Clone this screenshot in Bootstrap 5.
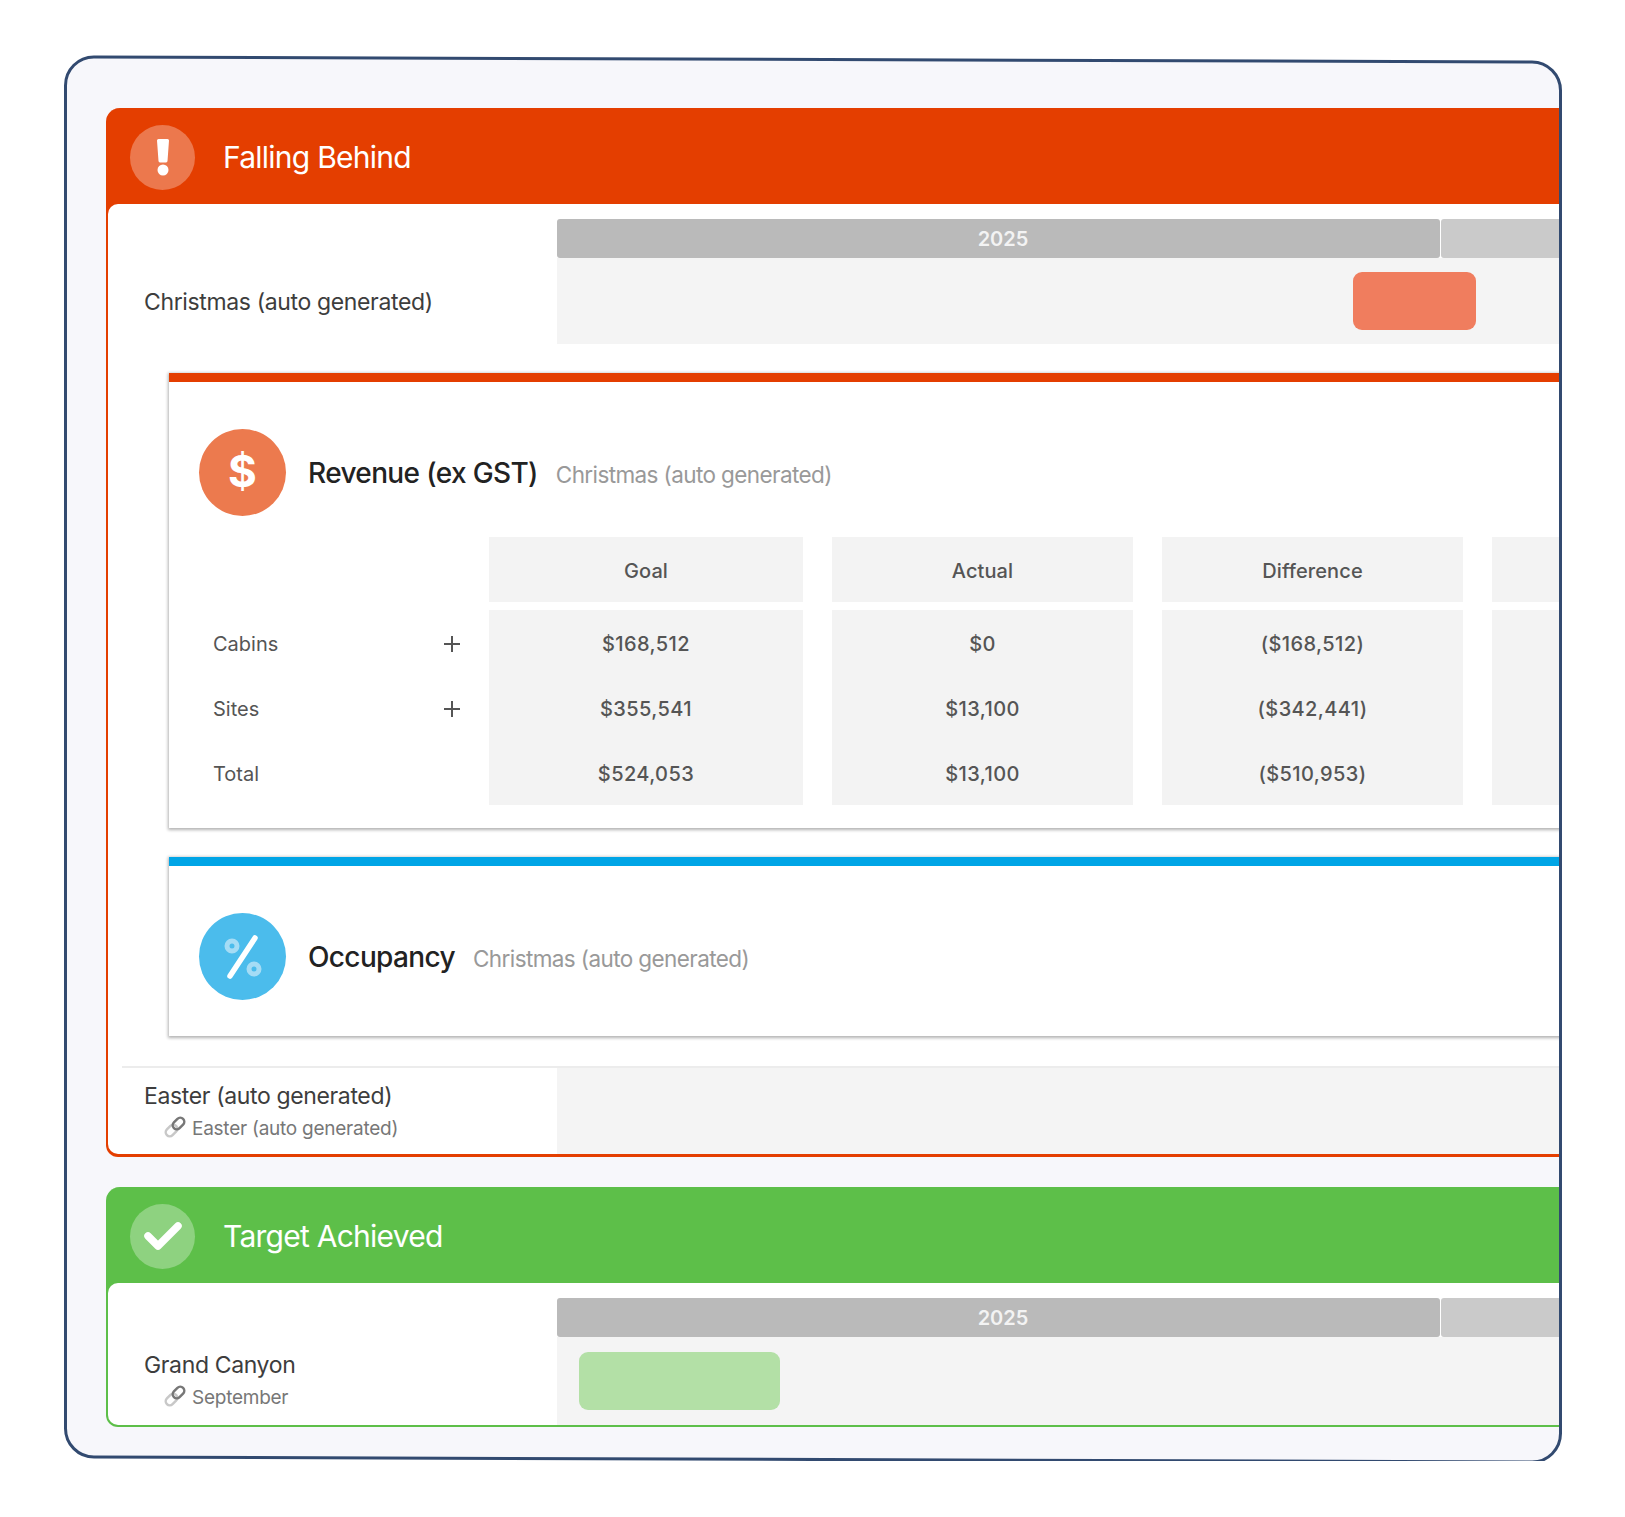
<!DOCTYPE html>
<html lang="en">
  <head>
    <meta charset="UTF-8" />
    <title>Goals</title>
    <link href="https://cdn.jsdelivr.net/npm/bootstrap@5.3.3/dist/css/bootstrap.min.css" rel="stylesheet" />
    <style>
      body { background: #fff; font-family: Inter, "Liberation Sans", sans-serif; color: #444; }
      .frame { position: relative; width: 1498px; height: 1403px; margin: 58px 0 0 64px; z-index: 0; }
      .frame::before { content: ""; position: absolute; inset: 0; z-index: -1; background: #f7f7fb; border: 3px solid #324a70; border-radius: 30px; transform: skewY(.2deg); }
      .frame-clip { width: 1495px; height: 100%; overflow: hidden; padding: 50px 0 0 42px; }
      .panel { width: 1600px; border-style: solid; border-width: 0 2px 3px 2px; border-radius: 14px 0 0 12px; }
      .panel + .panel { margin-top: 30px; }
      .panel-red { background: #e43e00; border-color: #e43e00; }
      .panel-green { background: #5dbf49; border-color: #5dbf49; border-bottom-width: 2px; }
      .panel-head { height: 96px; padding: 2px 0 0 22px; gap: 28px; color: #fff; font-size: 30px; letter-spacing: -.75px; }
      .head-ico { width: 65px; height: 65px; background: rgba(255,255,255,.3); }
      .panel-body { background: #fff; border-radius: 10px 0 0 10px; }
      .tl-row { padding-top: 15px; }
      .tl-label { width: 449px; height: 86px; padding-left: 36px; font-size: 23px; letter-spacing: -.36px; color: #3d3d3d; }
      .label-low { padding-top: 3px; }
      .label-high { height: 88px; padding-bottom: 2px; }
      .tl-sub { font-size: 19px; letter-spacing: -.25px; color: #777; padding-left: 20px; margin-top: 1px; gap: 6px; }
      .tl-side { width: 1147px; }
      .years { gap: 1px; height: 39px; }
      .year-a { width: 883px; background: #bababa; color: #f3f3f3; font-weight: 600; font-size: 20px; border-radius: 3px; padding-left: 9px; }
      .year-b { flex-grow: 1; background: #cacaca; border-radius: 3px 0 0 3px; }
      .tl-track { height: 86px; background: #f4f4f4; padding-top: 14px; }
      .track-tall { height: 88px; padding-top: 15px; }
      .tl-pill { height: 58px; border-radius: 9px; }
      .pill-red { width: 123px; margin-left: 796px; background: #f07d5e; }
      .pill-green { width: 201px; margin-left: 22px; background: #b3e0a6; }
      .goal-card { margin: 29px 0 0 61px; border: 0; border-radius: 0; border-top: 9px solid; box-shadow: 0 1px 3px 1px rgba(0,0,0,.3); }
      .goal-red { border-top-color: #e43e00; }
      .goal-blue { border-top-color: #00a5e6; }
      .goal-head { padding: 47px 0 0 30px; gap: 22px; }
      .goal-ico { width: 87px; height: 87px; color: #fff; }
      .ico-orange { background: #ec7a4e; font-size: 44px; font-weight: 700; padding-bottom: 4px; }
      .ico-blue { background: #4bbcec; }
      .goal-title { font-size: 28px; font-weight: 500; letter-spacing: -.63px; color: #222; }
      .goal-sub { font-size: 22.5px; letter-spacing: -.6px; color: #999; margin-left: -4px; padding-top: 4px; }
      .goal-grid { display: grid; grid-template-columns: 246px 314px 301px 301px 120px; column-gap: 29px; padding: 21px 0 23px 45px; font-size: 20px; color: #555; }
      .label-col { margin: 0 -29px 0 -1px; padding-right: 28px; }
      .grid-h { height: 65px; padding-top: 2px; background: #f3f3f3; margin-bottom: 8px; font-weight: 500; letter-spacing: .1px; }
      .grid-b { background: #f3f3f3; font-weight: 500; letter-spacing: .4px; }
      .grid-r { height: 65px; padding-top: 2px; }
      .row-plus { width: 18px; height: 18px; }
      .occ-pad { padding-bottom: 36px; }
      .divider { margin: 30px 0 0 14px; border-top: 2px solid #ececec; }
      .easter-label { width: 435px; padding-left: 22px; }
      .link-ico { margin-top: -3px; }
    </style>
  </head>
  <body>
    <div class="frame">
      <div class="frame-clip">

        <!-- Falling behind -->
        <div class="panel panel-red">
          <div class="panel-head d-flex align-items-center">
            <div class="head-ico rounded-circle d-flex align-items-center justify-content-center">
              <svg width="14" height="38" viewBox="0 0 14 38"><path d="M1 2.5A1.5 1.5 0 0 1 2.500 1h9A1.500 1.500 0 0 1 13 2.500L11.500 23a1.500 1.500 0 0 1-1.500 1.400H4A1.500 1.500 0 0 1 2.500 23z" fill="#fff"/><circle cx="7" cy="32" r="5.500" fill="#fff"/></svg>
            </div>
            <div>Falling Behind</div>
          </div>
          <div class="panel-body">
            <div class="tl-row d-flex">
              <div class="tl-label label-low align-self-end d-flex align-items-center">Christmas (auto generated)</div>
              <div class="tl-side">
                <div class="years d-flex">
                  <div class="year-a d-flex align-items-center justify-content-center">2025</div>
                  <div class="year-b"></div>
                </div>
                <div class="tl-track"><div class="tl-pill pill-red"></div></div>
              </div>
            </div>

            <div class="card goal-card goal-red">
              <div class="goal-head d-flex align-items-center">
                <div class="goal-ico ico-orange rounded-circle d-flex align-items-center justify-content-center">$</div>
                <div class="goal-title">Revenue (ex GST)</div>
                <div class="goal-sub">Christmas (auto generated)</div>
              </div>
              <div class="goal-grid">
                <div class="label-col">
                  <div class="grid-h bg-transparent"></div>
                  <div class="grid-r d-flex align-items-center justify-content-between">Cabins
                    <svg class="row-plus" viewBox="0 0 18 18"><path d="M9 1v16M1 9h16" stroke="#555" stroke-width="2"/></svg></div>
                  <div class="grid-r d-flex align-items-center justify-content-between">Sites
                    <svg class="row-plus" viewBox="0 0 18 18"><path d="M9 1v16M1 9h16" stroke="#555" stroke-width="2"/></svg></div>
                  <div class="grid-r d-flex align-items-center">Total</div>
                </div>
                <div class="text-center">
                  <div class="grid-h d-flex align-items-center justify-content-center">Goal</div>
                  <div class="grid-b">
                    <div class="grid-r d-flex align-items-center justify-content-center">$168,512</div>
                    <div class="grid-r d-flex align-items-center justify-content-center">$355,541</div>
                    <div class="grid-r d-flex align-items-center justify-content-center">$524,053</div>
                  </div>
                </div>
                <div class="text-center">
                  <div class="grid-h d-flex align-items-center justify-content-center">Actual</div>
                  <div class="grid-b">
                    <div class="grid-r d-flex align-items-center justify-content-center">$0</div>
                    <div class="grid-r d-flex align-items-center justify-content-center">$13,100</div>
                    <div class="grid-r d-flex align-items-center justify-content-center">$13,100</div>
                  </div>
                </div>
                <div class="text-center">
                  <div class="grid-h d-flex align-items-center justify-content-center">Difference</div>
                  <div class="grid-b">
                    <div class="grid-r d-flex align-items-center justify-content-center">($168,512)</div>
                    <div class="grid-r d-flex align-items-center justify-content-center">($342,441)</div>
                    <div class="grid-r d-flex align-items-center justify-content-center">($510,953)</div>
                  </div>
                </div>
                <div>
                  <div class="grid-h"></div>
                  <div class="grid-b"><div class="grid-r"></div><div class="grid-r"></div><div class="grid-r"></div></div>
                </div>
              </div>
            </div>

            <div class="card goal-card goal-blue">
              <div class="goal-head occ-pad d-flex align-items-center">
                <div class="goal-ico ico-blue rounded-circle d-flex align-items-center justify-content-center">
                  <svg width="38" height="44" viewBox="0 0 38 44">
                    <path d="M31 3L6 41" stroke="#fff" stroke-width="5.500" stroke-linecap="round"/>
                    <circle cx="8" cy="11" r="5" fill="none" stroke="#a5dcf5" stroke-width="5"/>
                    <circle cx="30" cy="34" r="5" fill="none" stroke="#a5dcf5" stroke-width="5"/>
                  </svg>
                </div>
                <div class="goal-title">Occupancy</div>
                <div class="goal-sub">Christmas (auto generated)</div>
              </div>
            </div>

            <div class="divider d-flex">
              <div class="tl-label easter-label flex-column d-flex justify-content-center">
                <div>Easter (auto generated)</div>
                <div class="tl-sub d-flex align-items-center">
                  <svg class="link-ico" width="22" height="22" viewBox="0 0 22 22" fill="none" stroke-width="2.500"><rect x="3.500" y="8" width="8" height="13" rx="4" transform="rotate(45 7.500 14.500)" stroke="#c8c8c8"/><rect x="10.500" y="1" width="8" height="13" rx="4" transform="rotate(45 14.500 7.500)" stroke="#777"/></svg>
                  Easter (auto generated)
                </div>
              </div>
              <div class="tl-track tl-side"></div>
            </div>
          </div>
        </div>

        <!-- Target achieved -->
        <div class="panel panel-green">
          <div class="panel-head d-flex align-items-center">
            <div class="head-ico rounded-circle d-flex align-items-center justify-content-center">
              <svg width="38" height="30" viewBox="0 0 38 30"><path d="M4 15l10 10L34 5" fill="none" stroke="#fff" stroke-width="7.500" stroke-linecap="round" stroke-linejoin="round"/></svg>
            </div>
            <div>Target Achieved</div>
          </div>
          <div class="panel-body">
            <div class="tl-row d-flex">
              <div class="tl-label label-high align-self-end d-flex flex-column justify-content-center">
                <div>Grand Canyon</div>
                <div class="tl-sub d-flex align-items-center">
                  <svg class="link-ico" width="22" height="22" viewBox="0 0 22 22" fill="none" stroke-width="2.500"><rect x="3.500" y="8" width="8" height="13" rx="4" transform="rotate(45 7.500 14.500)" stroke="#c8c8c8"/><rect x="10.500" y="1" width="8" height="13" rx="4" transform="rotate(45 14.500 7.500)" stroke="#777"/></svg>
                  September
                </div>
              </div>
              <div class="tl-side">
                <div class="years d-flex">
                  <div class="year-a d-flex align-items-center justify-content-center">2025</div>
                  <div class="year-b"></div>
                </div>
                <div class="tl-track track-tall"><div class="tl-pill pill-green"></div></div>
              </div>
            </div>
          </div>
        </div>

      </div>
    </div>
    <script src="https://cdn.jsdelivr.net/npm/bootstrap@5.3.3/dist/js/bootstrap.bundle.min.js"></script>
  </body>
</html>
